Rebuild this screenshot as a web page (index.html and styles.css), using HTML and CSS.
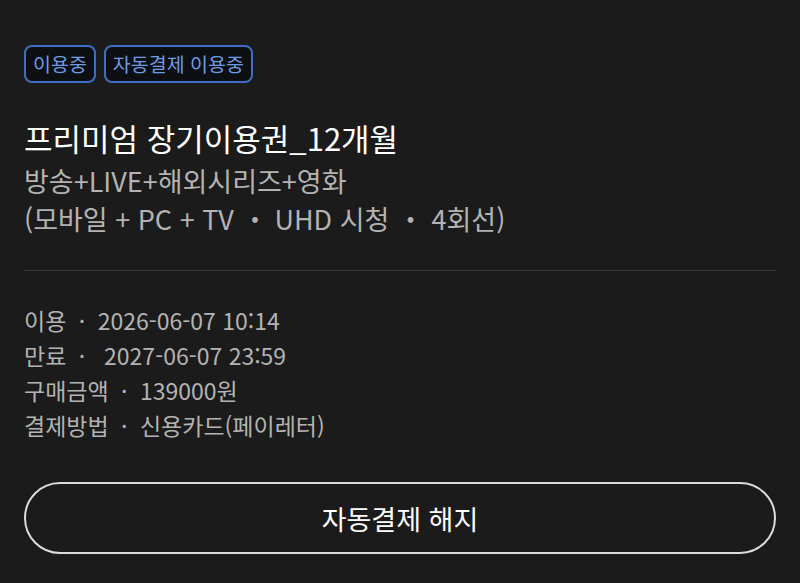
FILE: index.html
```html
<!DOCTYPE html>
<html lang="ko">
<head>
<meta charset="utf-8">
<link rel="stylesheet" href="styles.css">
</head>
<body>
<div class="page">
  <div class="badges">
    <span class="badge">이용중</span>
    <span class="badge">자동결제 이용중</span>
  </div>
  <h1 class="title">프리미엄 장기이용권_12개월</h1>
  <p class="sub first">방송+LIVE+해외시리즈+영화</p>
  <p class="sub">(모바일 + PC + TV ・ UHD 시청 ・ 4회선)</p>
  <hr class="divider">
  <ul class="info">
    <li>이용 <span class="dot">·</span> 2026-06-07 10:14</li>
    <li>만료 <span class="dot">·</span>&nbsp; 2027-06-07 23:59</li>
    <li>구매금액 <span class="dot">·</span> 139000원</li>
    <li>결제방법 <span class="dot">·</span> 신용카드(페이레터)</li>
  </ul>
  <button class="cancel">자동결제 해지</button>
</div>
</body>
</html>
```
FILE: styles.css
```css
html, body {
  margin: 0;
  padding: 0;
  background: #1b1b1b;
}
body {
  font-family: "Noto Sans CJK KR", "Noto Sans", sans-serif;
  width: 800px;
  height: 583px;
  overflow: hidden;
}
.page {
  padding: 45px 24px 0 24px;
  display: flex;
  flex-direction: column;
}
.badges {
  display: flex;
  gap: 8px;
}
.badge {
  border: 2px solid #3f6fc4;
  border-radius: 8px;
  background: #0e0f12;
  color: #6f9be3;
  font-size: 19.5px;
  line-height: 34px;
  padding: 0 7px;
}
.title {
  margin: 34px 0 0 0;
  color: #ffffff;
  font-size: 31px;
  font-weight: 400;
  line-height: 42px;
}
.sub {
  margin: 0;
  color: #b3b3b3;
  font-size: 27px;
  line-height: 38px;
}
.sub.first {
  margin-top: 3px;
}
.divider {
  border: none;
  border-top: 1px solid #353535;
  margin: 32px 0 32px 0;
  width: 100%;
}
.info {
  list-style: none;
  margin: 0;
  padding: 0;
  color: #b3b3b3;
  font-size: 23px;
  line-height: 35px;
}
.dot {
  padding: 0 6px;
}
.cancel {
  margin-top: 39px;
  height: 72px;
  border: 2px solid #dcdcdc;
  border-radius: 36px;
  background: #1b1b1b;
  color: #ffffff;
  font-family: inherit;
  font-size: 27px;
}
```
